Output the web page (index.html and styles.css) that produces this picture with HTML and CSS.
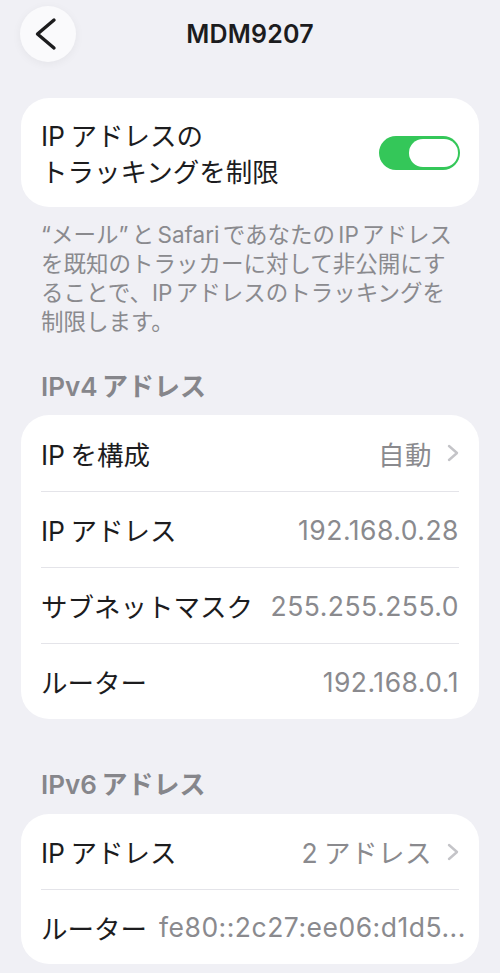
FILE: index.html
```html
<!DOCTYPE html>
<html lang="ja">
<head>
    <meta charset="UTF-8">
    <meta name="viewport" content="width=device-width, initial-scale=1.0">
    <title>MDM9207</title>
    <link rel="stylesheet" href="styles.css">
</head>
<body>
    <div class="nav">
        <div class="nav-left">
            <button class="back-btn">
                <svg width="56" height="56" viewBox="0 0 56 56">
                    <path d="M34 14 L17.5 28 L34 42" fill="none" stroke="#1c1c1e" stroke-width="3.4" stroke-linecap="round" stroke-linejoin="round"/>
                </svg>
            </button>
        </div>
        <h1 class="title">MDM9207</h1>
        <div></div>
    </div>

    <div class="card toggle-card">
        <div class="toggle-label">IP アドレスの<br>トラッキングを制限</div>
        <div class="toggle on"><span class="knob"></span></div>
    </div>
    <p class="footer">“メール” と Safari であなたの IP アドレス<br>を既知のトラッカーに対して非公開にす<br>ることで、IP アドレスのトラッキングを<br>制限します。</p>

    <h2 class="section-header">IPv4 アドレス</h2>
    <div class="card">
        <div class="row">
            <span class="label">IP を構成</span>
            <span class="value">自動</span>
            <svg class="chevron" width="12" height="18" viewBox="0 0 12 18">
                <path d="M2 2 L10 9 L2 16" fill="none" stroke="#c4c4c8" stroke-width="2.4" stroke-linecap="round" stroke-linejoin="round"/>
            </svg>
        </div>
        <div class="row">
            <span class="label">IP アドレス</span>
            <span class="value">192.168.0.28</span>
        </div>
        <div class="row">
            <span class="label">サブネットマスク</span>
            <span class="value">255.255.255.0</span>
        </div>
        <div class="row">
            <span class="label">ルーター</span>
            <span class="value">192.168.0.1</span>
        </div>
    </div>

    <h2 class="section-header v6">IPv6 アドレス</h2>
    <div class="card">
        <div class="row short">
            <span class="label">IP アドレス</span>
            <span class="value">2 アドレス</span>
            <svg class="chevron" width="12" height="18" viewBox="0 0 12 18">
                <path d="M2 2 L10 9 L2 16" fill="none" stroke="#c4c4c8" stroke-width="2.4" stroke-linecap="round" stroke-linejoin="round"/>
            </svg>
        </div>
        <div class="row short">
            <span class="label">ルーター</span>
            <span class="value">fe80::2c27:ee06:d1d5...</span>
        </div>
    </div>
</body>
</html>
```

FILE: styles.css
```css
body {
    margin: 0;
    padding: 0;
    background-color: #f0f0f5;
    font-family: Inter, "Noto Sans CJK JP", sans-serif;
    color: #1c1c1e;
    word-spacing: -2px;
}
.nav {
    display: grid;
    grid-template-columns: 76px 1fr 76px;
    align-items: center;
    height: 68px;
}
.nav-left {
    padding-left: 20px;
}
.back-btn {
    display: block;
    width: 56px;
    height: 56px;
    padding: 0;
    border: none;
    border-radius: 50%;
    background-color: #fafafc;
    box-shadow: 0 2px 10px rgba(0, 0, 0, 0.05);
}
.back-btn svg {
    display: block;
}
.title {
    margin: 0;
    text-align: center;
    font-size: 25px;
    font-weight: 600;
    letter-spacing: 0.2px;
}
.card {
    margin: 0 21px;
    background-color: #fff;
    border-radius: 28px;
}
.toggle-card {
    margin-top: 30px;
    height: 109px;
    padding: 0 19px 0 20px;
    display: flex;
    align-items: center;
    justify-content: space-between;
}
.toggle-label {
    font-size: 26.5px;
    line-height: 36px;
    padding-top: 2px;
}
.toggle {
    width: 81px;
    height: 34px;
    border-radius: 17px;
    background-color: #34c759;
    display: flex;
    align-items: center;
    justify-content: flex-end;
    padding: 0 2px;
    box-sizing: border-box;
}
.toggle .knob {
    width: 49px;
    height: 28px;
    border-radius: 14px;
    background-color: #fff;
}
.footer {
    margin: 13px 0 0;
    padding: 0 41px;
    font-size: 22.5px;
    line-height: 29px;
    color: #8a8a8e;
    white-space: nowrap;
    word-spacing: -3px;
}
.section-header {
    margin: 35px 0 13px;
    padding: 0 41px;
    font-size: 26px;
    line-height: 31px;
    font-weight: 600;
    color: #86868b;
}
.section-header.v6 {
    margin-top: 50px;
    margin-bottom: 14px;
}
.row {
    margin: 0 20px;
    height: 76px;
    box-sizing: border-box;
    display: flex;
    align-items: center;
    gap: 12px;
    font-size: 26.5px;
}
.row.short {
    height: 75px;
}
.row + .row {
    border-top: 1px solid #e4e4e9;
}
.label {
    white-space: nowrap;
}
.value {
    flex: 1;
    min-width: 0;
    text-align: right;
    color: #8a8a8e;
    white-space: nowrap;
    letter-spacing: 0.5px;
}
.chevron {
    flex-shrink: 0;
    margin-left: 3px;
}
```
